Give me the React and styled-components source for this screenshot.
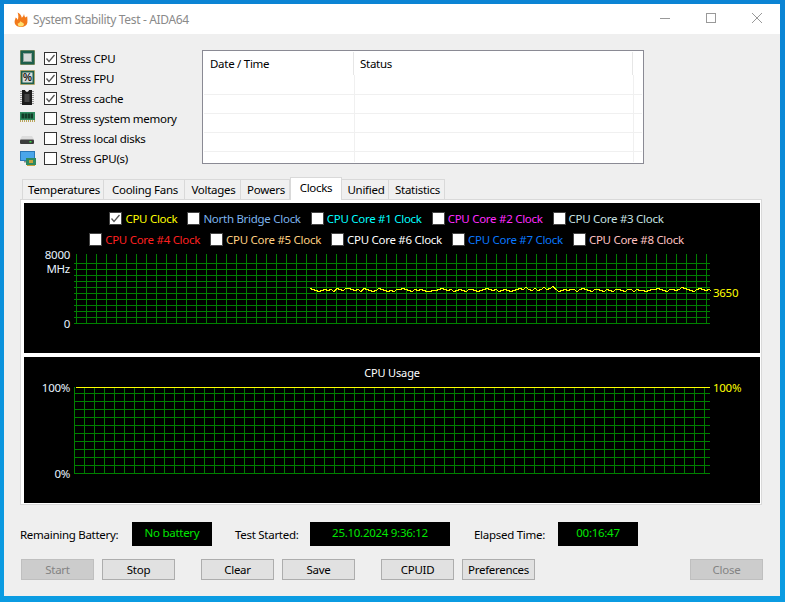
import React from 'react';
import styled, { createGlobalStyle } from 'styled-components';

const GlobalStyle = createGlobalStyle`
  html, body { margin: 0; padding: 0; height: 100%; overflow: hidden; }
  body {
    background: linear-gradient(180deg, #0b84d4 0%, #0b9ce2 100%);
    font-family: "Noto Sans", "Open Sans", sans-serif;
    font-size: 11.5px;
    letter-spacing: -0.28px;
    color: #000;
  }
`;

const Desktop = styled.div`
  width: 785px;
  height: 602px;
  padding: 4px 5px 6px 4px;
  box-sizing: border-box;
`;

const Win = styled.div`
  height: 592px;
  background: #efefef;
  display: flex;
  flex-direction: column;
`;

const TitleBar = styled.div`
  height: 30px;
  flex: none;
  background: #fff;
  display: flex;
  align-items: center;
  padding-left: 10px;
`;

const WinTitle = styled.span`
  margin-left: 5px;
  color: #8a8a8a;
  font-size: 12px;
  letter-spacing: -0.35px;
  flex: 1;
`;

const CaptionBtn = styled.div`
  width: 46px;
  height: 28px;
  margin-bottom: 2px;
  display: flex;
  align-items: center;
  justify-content: center;
`;

const Body = styled.div`
  flex: 1;
  display: flex;
  flex-direction: column;
  padding: 14px 17px 0 16px;
`;

const TopRow = styled.div`
  display: flex;
  height: 120px;
  flex: none;
`;

const StressList = styled.div`
  width: 182px;
  display: flex;
  flex-direction: column;
`;

const StressRow = styled.div`
  height: 20px;
  display: flex;
  align-items: center;
`;

const IconSlot = styled.div`
  width: 24px;
  height: 20px;
  box-sizing: border-box;
  display: flex;
  align-items: center;
  padding-bottom: ${p => p.$up || 0}px;
  padding-top: ${p => p.$down || 0}px;
`;

const Box = styled.span`
  width: 11px;
  height: 11px;
  background: #fff;
  border: 1px solid #333;
  display: inline-flex;
  flex: none;
  align-items: center;
  justify-content: center;
`;

const StressBox = styled(Box)`
  margin-right: 3px;
`;

const LogTable = styled.div`
  width: 438px;
  height: 110px;
  background: #fff;
  border: 1px solid #8a8a94;
  margin-top: 2px;
  padding: 1px;
  display: flex;
  flex-direction: column;
`;

const LogHead = styled.div`
  display: grid;
  grid-template-columns: 150px 279px 1fr;
  height: 23px;
  flex: none;
`;

const HeadCell = styled.div`
  border-right: 1px solid #e6e6e6;
  padding-left: 6px;
  display: flex;
  align-items: center;
`;

const LogRow = styled.div`
  display: grid;
  grid-template-columns: 151px 279px 1fr;
  height: ${p => p.$h}px;
  flex: none;
  border-bottom: ${p => (p.$last ? 'none' : '1px solid #f0f0f0')};
  box-sizing: border-box;
`;

const LogCell = styled.div`
  border-right: 1px solid #f0f0f0;
`;

const TabStrip = styled.div`
  display: flex;
  align-items: flex-end;
  height: 23px;
  flex: none;
  margin-top: 9px;
  padding-left: 2px;
  position: relative;
  z-index: 1;
  margin-bottom: -1px;
`;

const Tab = styled.div`
  box-sizing: border-box;
  height: ${p => (p.$active ? 23 : 21)}px;
  width: ${p => p.$w}px;
  display: flex;
  align-items: center;
  justify-content: center;
  background: ${p => (p.$active ? '#fff' : '#f0f0f0')};
  border: 1px solid #d9d9d9;
  border-left-width: ${p => (p.$first || p.$active ? 1 : 0)}px;
  border-bottom: ${p => (p.$active ? 'none' : '1px solid #d9d9d9')};
  padding-bottom: ${p => (p.$active ? 4 : 0)}px;
  padding-left: ${p => (p.$active ? 0 : 2)}px;
`;

const TabPage = styled.div`
  box-sizing: border-box;
  height: 306px;
  flex: none;
  margin-right: 1px;
  background: #fff;
  border: 1px solid #d9d9d9;
  padding: 3px 1px 1px 3px;
  display: flex;
  flex-direction: column;
  gap: 4px;
`;

const ChartPanel = styled.div`
  background: #000;
  height: ${p => p.$h}px;
  flex: none;
  display: flex;
  flex-direction: column;
  overflow: hidden;
`;

const Legend = styled.div`
  display: flex;
  flex-direction: column;
  padding-top: 5px;
  height: 51px;
  box-sizing: border-box;
  flex: none;
`;

const LegendRow = styled.div`
  height: 21px;
  display: flex;
  justify-content: center;
  align-items: center;
  gap: 10px;
  padding-right: 11px;
`;

const LegendItem = styled.div`
  display: flex;
  align-items: center;
  color: ${p => p.$c};
  white-space: nowrap;
`;

const LegendBox = styled(Box)`
  margin-right: 3px;
  border-color: #444;
`;

const PlotRow = styled.div`
  display: flex;
  height: 90px;
  flex: none;
`;

const AxisCol = styled.div`
  width: 46px;
  height: ${p => p.$h}px;
  margin-top: -6px;
  flex: none;
  display: flex;
  flex-direction: column;
  align-items: flex-end;
  color: #e6f3ff;
  line-height: 14px;
  box-sizing: border-box;
`;

const AxisSpacer = styled.div`
  flex: 1;
`;

const PlotSvg = styled.svg`
  display: block;
  flex: none;
  margin-left: 4px;
`;

const CurrentValue = styled.div`
  color: #ffff00;
  margin-left: 2px;
  margin-top: ${p => p.$mt}px;
  line-height: 14px;
`;

const UsageTitle = styled.div`
  color: #fff;
  text-align: center;
  height: 30px;
  padding-top: 8px;
  box-sizing: border-box;
  font-size: 11px;
  letter-spacing: -0.15px;
  flex: none;
`;

const StatusRow = styled.div`
  display: flex;
  align-items: center;
  height: 24px;
  flex: none;
  margin-top: 17px;
`;

const StatusLabel = styled.span`
  width: ${p => p.$w}px;
  padding-left: ${p => p.$pl || 0}px;
  box-sizing: border-box;
  flex: none;
`;

const StatusValue = styled.div`
  width: ${p => p.$w}px;
  height: 24px;
  flex: none;
  background: #000;
  color: #00e600;
  display: flex;
  align-items: center;
  justify-content: center;
  padding-bottom: 3px;
  box-sizing: border-box;
`;

const ButtonRow = styled.div`
  display: flex;
  height: 21px;
  flex: none;
  margin-top: 13px;
  padding-left: 1px;
`;

const Btn = styled.div`
  box-sizing: border-box;
  width: 73px;
  height: 21px;
  margin-left: ${p => p.$ml || 0}px;
  background: ${p => (p.$off ? '#cccccc' : '#e1e1e1')};
  border: 1px solid ${p => (p.$off ? '#bfbfbf' : '#adadad')};
  color: ${p => (p.$off ? '#838383' : '#000')};
  display: flex;
  align-items: center;
  justify-content: center;
`;

const Check = () => (
  <svg width="11" height="11" viewBox="0 0 11 11">
    <path d="M1.5 5.5L4 8.5L9.5 2" fill="none" stroke="#555" strokeWidth="1.3" />
  </svg>
);

const Flame = () => (
  <svg width="14" height="15" viewBox="0 0 14 15">
    <path d="M7 15C3 15 .6 12.8.6 10C.6 8.4 1.4 7.4 1.6 5.6C2.8 6.2 3.4 7 3.6 8C4.6 6 4.6 3 3.6 .4C6.2 1.6 7.4 3.6 7.8 5.8C8.8 5 9.8 3.6 10 1.8C10.3 3.6 10.6 4.6 11.4 5.4L13.2 4.2C13.4 6.4 13.6 8.4 13.4 10.4C13 13.2 10.6 15 7 15Z" fill="#f2791a" />
    <path d="M7 14.6C4.8 14.6 3.4 13.2 3.8 11.2C4.8 11.6 5.6 11 6.2 9.2C7.8 10.2 10.2 11 10 12.6C9.8 13.8 8.4 14.6 7 14.6Z" fill="#ffdf70" />
  </svg>
);

const CpuIcon = () => (
  <svg width="15" height="15" viewBox="0 0 15 15">
    <rect x="0.5" y="0.5" width="14" height="14" fill="#1c5f4b" stroke="#d2a23f" strokeDasharray="1 1" />
    <rect x="1" y="1" width="13" height="13" fill="none" stroke="#1c5f4b" />
    <rect x="3.5" y="3.5" width="8" height="8" fill="#d6dad8" stroke="#8fa39b" />
  </svg>
);

const FpuIcon = () => (
  <svg width="15" height="15" viewBox="0 0 15 15">
    <rect x="0.5" y="0.5" width="14" height="14" fill="#1c5f4b" stroke="#d2a23f" strokeDasharray="1 1" />
    <rect x="2.5" y="2.5" width="10" height="10" fill="#d9dcda" />
    <text x="7.5" y="11" textAnchor="middle" fontSize="10" fontWeight="700" letterSpacing="0" fontFamily="Liberation Sans, sans-serif" fill="#111">%</text>
  </svg>
);

const CacheIcon = () => (
  <svg width="14" height="15" viewBox="0 0 14 15">
    <path d="M2 0H12V15H2Z" fill="#1b1b1b" />
    <path d="M5 0C5.4 2.4 8.6 2.4 9 0Z" fill="#efefef" />
    <rect x="4.5" y="4" width="5" height="8" fill="#444" />
    <path d="M0 1.5H2M0 3.5H2M0 5.5H2M0 7.5H2M0 9.5H2M0 11.5H2M0 13.5H2M12 1.5H14M12 3.5H14M12 5.5H14M12 7.5H14M12 9.5H14M12 11.5H14M12 13.5H14" stroke="#9a9a9a" />
  </svg>
);

const RamIcon = () => (
  <svg width="15" height="10" viewBox="0 0 15 10">
    <rect x="0" y="0" width="15" height="8" fill="#2f8a5f" />
    <rect x="1.5" y="1.5" width="2.5" height="5" fill="#123c28" />
    <rect x="4.5" y="1.5" width="2.5" height="5" fill="#123c28" />
    <rect x="7.5" y="1.5" width="2.5" height="5" fill="#123c28" />
    <rect x="10.5" y="1.5" width="2.5" height="5" fill="#123c28" />
    <path d="M0 9H15" stroke="#b9a55a" strokeDasharray="1 1" strokeWidth="2" />
  </svg>
);

const DiskIcon = () => (
  <svg width="14" height="8" viewBox="0 0 14 8">
    <path d="M2 0H12L14 3.5H0Z" fill="#dcdcdc" />
    <rect x="0" y="3.5" width="14" height="4.5" rx="1" fill="#3c3c3c" />
    <rect x="9.5" y="5" width="2" height="1.5" fill="#3fdc4a" />
  </svg>
);

const GpuIcon = () => (
  <svg width="16" height="15" viewBox="0 0 16 15">
    <rect x="0.5" y="0.5" width="14" height="9" fill="#4aa6ea" stroke="#2a78b8" />
    <rect x="4" y="10" width="5" height="1.5" fill="#8a8a8a" />
    <rect x="6" y="7" width="10" height="7" fill="#2f8a5f" />
    <rect x="9" y="9" width="4" height="3" fill="#c7a23e" />
    <path d="M7 14.5H15" stroke="#c7a23e" />
  </svg>
);

const stress = [
  { label: 'Stress CPU', icon: <CpuIcon />, on: true, up: 2 },
  { label: 'Stress FPU', icon: <FpuIcon />, on: true, up: 2 },
  { label: 'Stress cache', icon: <CacheIcon />, on: true, up: 1 },
  { label: 'Stress system memory', icon: <RamIcon />, up: 2 },
  { label: 'Stress local disks', icon: <DiskIcon />, down: 3 },
  { label: 'Stress GPU(s)', icon: <GpuIcon /> },
];

const tabs = [
  ['Temperatures', 82], ['Cooling Fans', 81], ['Voltages', 56], ['Powers', 49],
  ['Clocks', 52], ['Unified', 47], ['Statistics', 56],
];

const legend1 = [
  ['CPU Clock', '#ffff00', true], ['North Bridge Clock', '#7db4ee'], ['CPU Core #1 Clock', '#00ffff'],
  ['CPU Core #2 Clock', '#ff2cff'], ['CPU Core #3 Clock', '#c6e2e2'],
];
const legend2 = [
  ['CPU Core #4 Clock', '#ff2020'], ['CPU Core #5 Clock', '#ffd080'], ['CPU Core #6 Clock', '#ffffff'],
  ['CPU Core #7 Clock', '#0a78ff'], ['CPU Core #8 Clock', '#ffc0c0'],
];

const range = (n, f) => Array.from({ length: n }, (_, i) => f(i));

// wiggle around the 3650 MHz line, fixed so the picture does not change
const wiggle = [
  -1,0,1,2,1,0,1,0,2,-1,0,1,-1,-1,0,1,0,2,-1,0,1,2,1,-1,0,1,2,1,2,0,0,-1,
  0,1,2,0,1,0,1,2,2,1,1,0,-1,0,1,0,2,1,0,1,2,0,0,1,2,1,0,-1,0,1,0,2,1,
  0,1,2,1,0,-1,0,-2,0,1,-1,1,0,-2,0,-1,-3,0,2,1,0,1,0,0,2,0,-1,0,1,2,0,
  0,1,2,0,1,2,0,0,1,2,0,0,2,0,1,1,2,1,0,0,-1,0,1,2,0,0,1,0,-2,-1,0,1,
  2,0,-1,0,1,0,2,
];
const clockLine = wiggle.map((d, i) => `${236 + i * 3},${35.5 + d}`).join(' ');

function ClockPlot() {
  return (
    <PlotSvg width="637" height="70" viewBox="0 0 637 70" shapeRendering="crispEdges">
      {range(64, i => (
        <line key={i} x1={2.5 + i * 10} x2={2.5 + i * 10} y1="0" y2="70" stroke="#008000" />
      ))}
      {range(11, i => (
        <line key={i} x1="0" x2="636" y1={69.5 - i * 6} y2={69.5 - i * 6} stroke="#008000" />
      ))}
      <polyline points={clockLine} fill="none" stroke="#ffff00" />
    </PlotSvg>
  );
}

function UsagePlot() {
  return (
    <PlotSvg width="637" height="87" viewBox="0 0 637 87" shapeRendering="crispEdges">
      {range(64, i => (
        <line key={i} x1={0.5 + i * 10} x2={0.5 + i * 10} y1="0" y2="87" stroke="#008000" />
      ))}
      {range(11, i => (
        <line key={i} x1="0" x2="636" y1={86.5 - i * 8} y2={86.5 - i * 8} stroke="#008000" />
      ))}
      <line x1="2" x2="636" y1="0.5" y2="0.5" stroke="#ffff00" />
    </PlotSvg>
  );
}

export default function App() {
  return (
    <Desktop>
      <GlobalStyle />
      <Win>
        <TitleBar>
          <Flame />
          <WinTitle>System Stability Test - AIDA64</WinTitle>
          <CaptionBtn>
            <svg width="10" height="10" viewBox="0 0 10 10"><path d="M0 5.5H10" stroke="#999" /></svg>
          </CaptionBtn>
          <CaptionBtn>
            <svg width="10" height="10" viewBox="0 0 10 10"><rect x="0.5" y="0.5" width="9" height="9" fill="none" stroke="#999" /></svg>
          </CaptionBtn>
          <CaptionBtn>
            <svg width="10" height="10" viewBox="0 0 10 10"><path d="M0 0L10 10M10 0L0 10" stroke="#999" /></svg>
          </CaptionBtn>
        </TitleBar>
        <Body>
          <TopRow>
            <StressList>
              {stress.map(s => (
                <StressRow key={s.label}>
                  <IconSlot $up={s.up} $down={s.down}>{s.icon}</IconSlot>
                  <StressBox>{s.on && <Check />}</StressBox>
                  {s.label}
                </StressRow>
              ))}
            </StressList>
            <LogTable>
              <LogHead>
                <HeadCell>Date / Time</HeadCell>
                <HeadCell>Status</HeadCell>
              </LogHead>
              <LogRow $h={20}><LogCell /><LogCell /></LogRow>
              <LogRow $h={19}><LogCell /><LogCell /></LogRow>
              <LogRow $h={19}><LogCell /><LogCell /></LogRow>
              <LogRow $h={19}><LogCell /><LogCell /></LogRow>
              <LogRow $h={10} $last><LogCell /><LogCell /></LogRow>
            </LogTable>
          </TopRow>
          <TabStrip>
            {tabs.map(([t, w], i) => (
              <Tab key={t} $w={w} $first={i === 0} $active={t === 'Clocks'}>{t}</Tab>
            ))}
          </TabStrip>
          <TabPage>
            <ChartPanel $h={150}>
              <Legend>
                <LegendRow>
                  {legend1.map(([t, c, on]) => (
                    <LegendItem key={t} $c={c}><LegendBox>{on && <Check />}</LegendBox>{t}</LegendItem>
                  ))}
                </LegendRow>
                <LegendRow>
                  {legend2.map(([t, c]) => (
                    <LegendItem key={t} $c={c}><LegendBox />{t}</LegendItem>
                  ))}
                </LegendRow>
              </Legend>
              <PlotRow>
                <AxisCol $h={83}>
                  <span>8000</span>
                  <span>MHz</span>
                  <AxisSpacer />
                  <span>0</span>
                </AxisCol>
                <ClockPlot />
                <CurrentValue $mt={32}>3650</CurrentValue>
              </PlotRow>
            </ChartPanel>
            <ChartPanel $h={146}>
              <UsageTitle>CPU Usage</UsageTitle>
              <PlotRow>
                <AxisCol $h={100}>
                  <span>100%</span>
                  <AxisSpacer />
                  <span>0%</span>
                </AxisCol>
                <UsagePlot />
                <CurrentValue $mt={-6}>100%</CurrentValue>
              </PlotRow>
            </ChartPanel>
          </TabPage>
          <StatusRow>
            <StatusLabel $w={112}>Remaining Battery:</StatusLabel>
            <StatusValue $w={80}>No battery</StatusValue>
            <StatusLabel $w={98} $pl={23}>Test Started:</StatusLabel>
            <StatusValue $w={140}>25.10.2024 9:36:12</StatusValue>
            <StatusLabel $w={108} $pl={24}>Elapsed Time:</StatusLabel>
            <StatusValue $w={80}>00:16:47</StatusValue>
          </StatusRow>
          <ButtonRow>
            <Btn $off>Start</Btn>
            <Btn $ml={8}>Stop</Btn>
            <Btn $ml={26}>Clear</Btn>
            <Btn $ml={8}>Save</Btn>
            <Btn $ml={26}>CPUID</Btn>
            <Btn $ml={8}>Preferences</Btn>
            <Btn $off $ml={155}>Close</Btn>
          </ButtonRow>
        </Body>
      </Win>
    </Desktop>
  );
}
